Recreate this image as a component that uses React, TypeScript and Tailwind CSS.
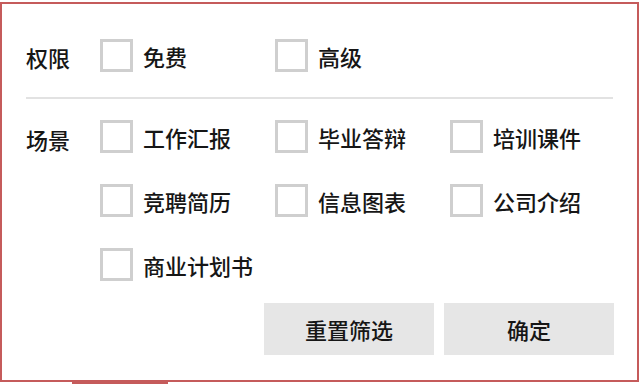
import React, { useState } from 'react';

const FONT = { fontFamily: '"Noto Sans CJK SC", "Noto Sans", sans-serif' };

type Group = { label: string; options: string[] };

const groups: Group[] = [
  { label: '权限', options: ['免费', '高级'] },
  { label: '场景', options: ['工作汇报', '毕业答辩', '培训课件', '竞聘简历', '信息图表', '公司介绍', '商业计划书'] },
];

function Check({ label, checked, onToggle }: { label: string; checked: boolean; onToggle: () => void }) {
  return (
    <button type="button" onClick={onToggle} className="flex items-center gap-[10px] h-[33px] text-left">
      <span className="w-[33px] h-[33px] shrink-0 border-[3px] border-[#cfcfcf] bg-white flex items-center justify-center text-[#555] text-[18px]">
        {checked ? '✓' : ''}
      </span>
      <span className="text-[22px] leading-none font-medium text-[#161616] whitespace-nowrap">{label}</span>
    </button>
  );
}

export default function App() {
  const [selected, setSelected] = useState<string[]>([]);

  const toggle = (v: string) =>
    setSelected((prev) => (prev.includes(v) ? prev.filter((x) => x !== v) : [...prev, v]));

  return (
    <div className="w-[640px] h-[384px] bg-white overflow-hidden" style={FONT}>
      <div className="mt-[2px] w-[639px] h-[380px] border-2 border-[#c55b5b] bg-white flex flex-col pl-[24px] pr-[23px] pt-[35px]">
        {/* 权限 */}
        <div className="flex">
          <div className="w-[74px] shrink-0 h-[33px] flex items-center text-[22px] leading-none font-medium text-[#161616] pt-[3px]">
            {groups[0].label}
          </div>
          <div className="grid grid-cols-[175px_175px]">
            {groups[0].options.map((o) => (
              <Check key={o} label={o} checked={selected.includes(o)} onToggle={() => toggle(o)} />
            ))}
          </div>
        </div>

        <div className="mt-[25px] h-[2px] bg-[#e2e2e2] w-[587px]" />

        {/* 场景 */}
        <div className="flex mt-[21px]">
          <div className="w-[74px] shrink-0 h-[33px] flex items-center text-[22px] leading-none font-medium text-[#161616] pt-[5px]">
            {groups[1].label}
          </div>
          <div className="grid grid-cols-[175px_175px_auto] gap-y-[31px]">
            {groups[1].options.map((o) => (
              <Check key={o} label={o} checked={selected.includes(o)} onToggle={() => toggle(o)} />
            ))}
          </div>
        </div>

        {/* Actions */}
        <div className="flex justify-end gap-[10px] mt-[22px]">
          <button
            type="button"
            onClick={() => setSelected([])}
            className="w-[170px] h-[52px] bg-[#e6e6e6] text-[22px] leading-none font-medium text-[#161616]"
          >
            重置筛选
          </button>
          <button type="button" className="w-[170px] h-[52px] bg-[#e6e6e6] text-[22px] leading-none font-medium text-[#161616]">
            确定
          </button>
        </div>
      </div>
      <div className="flex h-[2px]">
        <div className="ml-[72px] w-[96px] bg-[#c55b5b]" />
      </div>
    </div>
  );
}
